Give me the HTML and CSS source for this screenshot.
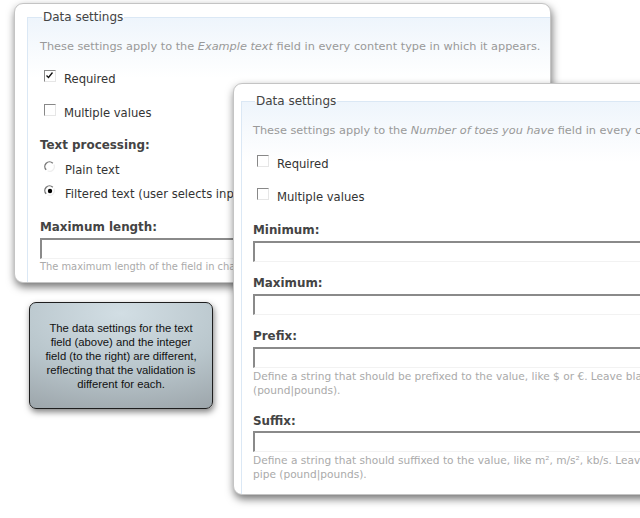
FILE: index.html
```html
<!DOCTYPE html>
<html>
<head>
<meta charset="utf-8">
<link rel="stylesheet" href="styles.css">
</head>
<body>
<div class="desk">
  <div class="win win1">
    <fieldset class="fs fs1">
      <legend class="lg">Data settings</legend>
      <div class="desc d1">These settings apply to the <em>Example text</em> field in every content type in which it appears.</div>
      <div class="row r-req1"><span class="cb"><svg width="11" height="11" viewBox="0 0 11 11"><path d="M2.5 5.5 L4.5 7.5 L8.5 2.5" fill="none" stroke="#111" stroke-width="1.3"/></svg></span>Required</div>
      <div class="row r-mul1"><span class="cb"></span>Multiple values</div>
      <div class="label l-tp">Text processing:</div>
      <div class="row r-plain"><span class="rd"><svg width="12" height="12" viewBox="0 0 12 12"><circle cx="6" cy="6" r="5" fill="#fff"/><path d="M2.2 8.8 A4.6 4.6 0 0 1 8.8 2.2" fill="none" stroke="#777" stroke-width="1.4"/><path d="M9.8 3.6 A4.6 4.6 0 0 1 3.6 9.8" fill="none" stroke="#eee" stroke-width="1.2"/></svg></span>Plain text</div>
      <div class="row r-filt"><span class="rd"><svg width="12" height="12" viewBox="0 0 12 12"><circle cx="6" cy="6" r="5" fill="#fff"/><path d="M2.2 8.8 A4.6 4.6 0 0 1 8.8 2.2" fill="none" stroke="#777" stroke-width="1.4"/><path d="M9.8 3.6 A4.6 4.6 0 0 1 3.6 9.8" fill="none" stroke="#eee" stroke-width="1.2"/><circle cx="6" cy="6" r="2.2" fill="#000"/></svg></span>Filtered text (user selects input format)</div>
      <div class="label l-max">Maximum length:</div>
      <div class="input i1"></div>
      <div class="help h1">The maximum length of the field in characters. Leave blank for an unlimited size.</div>
    </fieldset>
  </div>

  <div class="callout">The data settings for the text field (above) and the integer field (to the right) are different, reflecting that the validation is different for each.</div>

  <div class="win win2">
    <fieldset class="fs fs2">
      <legend class="lg">Data settings</legend>
      <div class="desc d2">These settings apply to the <em>Number of toes you have</em> field in every content type in which it appears.</div>
      <div class="row r-req2"><span class="cb"></span>Required</div>
      <div class="row r-mul2"><span class="cb"></span>Multiple values</div>
      <div class="label l-min">Minimum:</div>
      <div class="input"></div>
      <div class="label l-mx">Maximum:</div>
      <div class="input"></div>
      <div class="label l-pre">Prefix:</div>
      <div class="input"></div>
      <div class="help h2">Define a string that should be prefixed to the value, like $ or €. Leave blank for none. Separate singular and plural values with a<br>(pound|pounds).</div>
      <div class="label l-suf">Suffix:</div>
      <div class="input i-suf"></div>
      <div class="help h3">Define a string that should suffixed to the value, like m², m/s², kb/s. Leave blank for none. Separate singular and plural values with a<br>pipe (pound|pounds).</div>
    </fieldset>
  </div>
</div>
</body>
</html>
```
FILE: styles.css
```css
html, body {
  margin: 0;
  padding: 0;
  background: #fff;
  overflow: hidden;
}
.desk {
  position: relative;
  width: 640px;
  height: 518px;
  overflow: hidden;
  font-family: "DejaVu Sans", Verdana, sans-serif;
  color: #333;
}
.win {
  position: absolute;
  background: #fff;
  border: 1px solid #c4c4c4;
  border-radius: 9px;
  box-shadow: 1px 4px 9px rgba(0, 0, 0, 0.55);
  overflow: hidden;
  box-sizing: border-box;
}
.win1 {
  left: 14px;
  top: 3px;
  width: 537px;
  height: 280px;
}
.win2 {
  left: 233px;
  top: 83px;
  width: 460px;
  height: 412px;
}
.fs {
  margin: 0;
  border: 0;
  border-top: 1px solid #dbe8f5;
  border-left: 1px solid #dbe8f5;
  background: linear-gradient(#eef5fc 0px, #f7fafd 30px, #fff 60px);
  min-width: 0;
  box-sizing: border-box;
}
.fs1 {
  margin: 5px 0 0 12px;
  padding: 0 0 0 12px;
  height: 300px;
}
.fs2 {
  margin: 9px 0 0 7px;
  padding: 0 0 0 11px;
  height: 420px;
}
.lg {
  font-size: 12px;
  color: #444;
  padding: 0 1px;
  line-height: 16px;
}
.fs1 .lg { margin-left: 2px; }
.fs2 .lg { margin-left: 2px; }
.desc {
  font-size: 11.3px;
  color: #999;
  line-height: 16px;
  white-space: nowrap;
}
.d1 { margin-top: 14px; }
.d2 { margin-top: 14px; }
.row {
  font-size: 11.6px;
  line-height: 16px;
  display: flex;
  align-items: center;
  white-space: nowrap;
  color: #333;
}
.cb {
  width: 12px;
  height: 12px;
  box-sizing: border-box;
  border-top: 1px solid #888;
  border-left: 1px solid #888;
  border-right: 1px solid #e6e6e6;
  border-bottom: 1px solid #e6e6e6;
  background: #fff;
  margin: 0 8px 0 4px;
  display: flex;
  position: relative;
  top: -3px;
}
.cb svg { margin: -1px 0 0 -1px; }
.rd {
  width: 12px;
  height: 12px;
  margin: 0 9px 0 4px;
  display: flex;
  position: relative;
  top: -3px;
}
.label {
  font-size: 11.9px;
  font-weight: bold;
  color: #444;
  line-height: 16px;
  white-space: nowrap;
}
.input {
  height: 21px;
  box-sizing: border-box;
  border-top: 2px solid #8a8a8a;
  border-left: 2px solid #8a8a8a;
  border-bottom: 1px solid #f2f2f2;
  border-right: 1px solid #f2f2f2;
  background: #fff;
  margin-top: 3px;
  width: 600px;
}
.help {
  font-size: 9.9px;
  color: #aaa;
  line-height: 14px;
  white-space: nowrap;
}
.h1 { margin-top: 1px; }
.h2, .h3 { font-size: 10.6px; }

.r-req1 { margin-top: 16px; }
.r-mul1 { margin-top: 18px; }
.l-tp { margin-top: 16px; }
.r-plain { margin-top: 9px; }
.r-filt { margin-top: 8px; }
.l-max { margin-top: 17px; }

.r-req2 { margin-top: 17px; }
.r-mul2 { margin-top: 17px; }
.l-min { margin-top: 17px; }
.l-mx { margin-top: 13px; }
.l-pre { margin-top: 13px; }
.h2 { margin-top: 1px; }
.l-suf { margin-top: 16px; }
.i-suf { margin-top: 2px; }
.h3 { margin-top: 1px; }

.callout {
  position: absolute;
  left: 29px;
  top: 302px;
  width: 184px;
  height: 107px;
  box-sizing: border-box;
  border: 1px solid #1e1e1e;
  border-radius: 7px;
  background: radial-gradient(ellipse 120% 110% at 50% 10%, #d2dee4 0%, #b9c6cc 50%, #979fa4 100%);
  box-shadow: 1px 3px 6px rgba(0, 0, 0, 0.5);
  font-family: "Liberation Sans", Arial, sans-serif;
  font-size: 11.3px;
  line-height: 14px;
  color: #111;
  text-align: center;
  padding: 18px 12px 0 12px;
}
```
